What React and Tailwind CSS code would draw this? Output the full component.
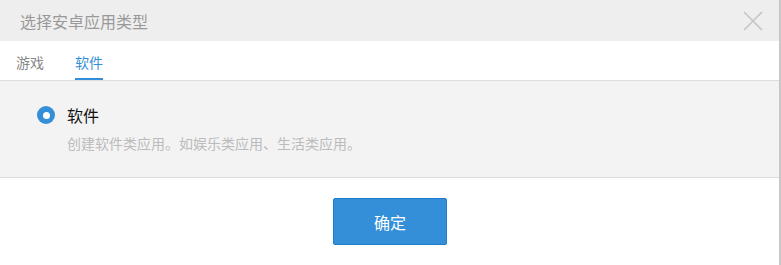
import React, { useState } from 'react'

const App = () => {
  const [tab, setTab] = useState('soft');

  return (
    <div className="w-[781px] h-[265px] bg-white border-r-2 border-[#c8c8c8] overflow-hidden" style={{ fontFamily: '"Microsoft YaHei", "Noto Sans CJK SC", sans-serif' }}>
      {/* Header */}
      <div className="h-[41px] bg-[#eeeeee] flex items-center justify-between pl-[20px] pr-[16px]">
        <span className="text-[16px] text-[#999999]">选择安卓应用类型</span>
        <button className="w-[20px] h-[20px] flex items-center justify-center">
          <svg width="20" height="20" viewBox="0 0 20 20" fill="none" stroke="#c4c4c4" strokeWidth="1.6">
            <path d="M1 1 L19 19 M19 1 L1 19" />
          </svg>
        </button>
      </div>

      {/* Tabs */}
      <div className="h-[40px] flex items-end pl-[16px] gap-[31px] border-b border-[#dddddd]">
        <button onClick={() => setTab('game')} className={`h-full flex flex-col justify-center pt-[4px] relative text-[14px] ${tab === 'game' ? 'text-[#348fd8]' : 'text-[#888888]'}`}>
          游戏
          {tab === 'game' && <span className="absolute left-0 right-0 bottom-0 h-[2px] bg-[#348fd8]" />}
        </button>
        <button onClick={() => setTab('soft')} className={`h-full flex flex-col justify-center pt-[4px] relative text-[14px] ${tab === 'soft' ? 'text-[#348fd8]' : 'text-[#888888]'}`}>
          软件
          {tab === 'soft' && <span className="absolute left-0 right-0 bottom-0 h-[2px] bg-[#348fd8]" />}
        </button>
      </div>

      {/* Content */}
      <div className="h-[97px] bg-[#f3f3f3] border-b border-[#dddddd] pl-[37px] pt-[22px]">
        <div className="flex items-center gap-[12px]">
          <span className="w-[18px] h-[18px] rounded-full bg-[#348fd8] flex items-center justify-center">
            <span className="w-[7px] h-[7px] rounded-full bg-white" />
          </span>
          <span className="text-[16px] text-[#111111]">{tab === 'soft' ? '软件' : '游戏'}</span>
        </div>
        <div className="pl-[30px] mt-[6px] text-[14px] text-[#bbbbbb]">
          {tab === 'soft' ? '创建软件类应用。如娱乐类应用、生活类应用。' : '创建游戏类应用。'}
        </div>
      </div>

      {/* Footer */}
      <div className="flex justify-center pt-[20px] pl-[1px]">
        <button className="w-[114px] h-[47px] bg-[#348fd8] border border-[#1f7bcc] rounded-[2px] text-white text-[16px]">
          确定
        </button>
      </div>
    </div>
  );
};

export default App;
